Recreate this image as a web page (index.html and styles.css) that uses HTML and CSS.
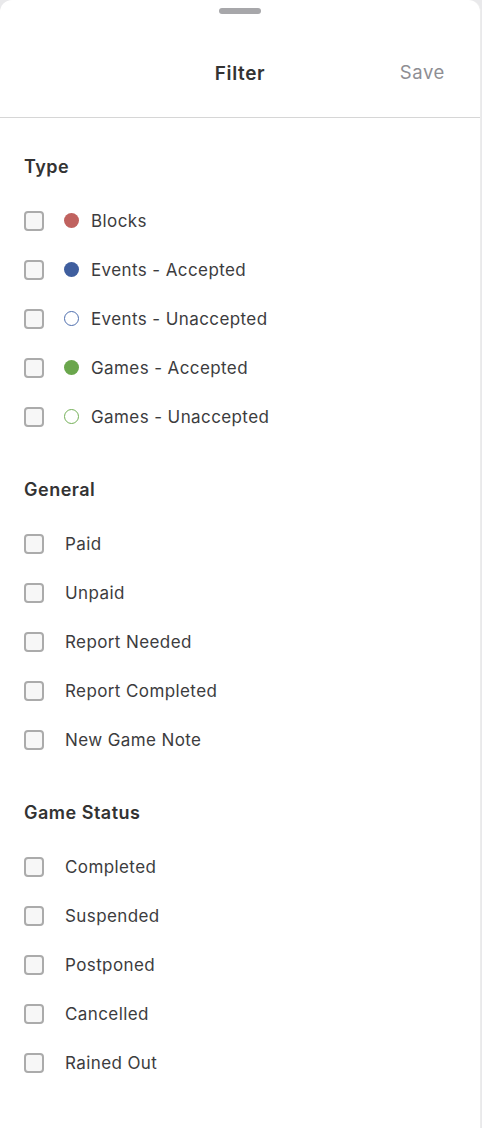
FILE: index.html
```html
<!DOCTYPE html>
<html lang="en">
<head>
    <meta charset="UTF-8">
    <meta name="viewport" content="width=device-width, initial-scale=1.0">
    <title>Filter</title>
    <link rel="stylesheet" href="styles.css">
</head>
<body>

    <div class="sheet">

        <!-- Header -->
        <div class="sheet-header">
            <div class="handle"></div>
            <div class="title-bar">
                <span class="title">Filter</span>
                <button class="save-btn">Save</button>
            </div>
        </div>

        <!-- Type -->
        <div class="section">
            <h3 class="section-title">Type</h3>
            <label class="row"><input type="checkbox"><span class="dot red"></span><span class="label">Blocks</span></label>
            <label class="row"><input type="checkbox"><span class="dot blue"></span><span class="label">Events - Accepted</span></label>
            <label class="row"><input type="checkbox"><span class="dot blue-ring"></span><span class="label">Events - Unaccepted</span></label>
            <label class="row"><input type="checkbox"><span class="dot green"></span><span class="label">Games - Accepted</span></label>
            <label class="row"><input type="checkbox"><span class="dot green-ring"></span><span class="label">Games - Unaccepted</span></label>
        </div>

        <!-- General -->
        <div class="section">
            <h3 class="section-title">General</h3>
            <label class="row"><input type="checkbox"><span class="label plain">Paid</span></label>
            <label class="row"><input type="checkbox"><span class="label plain">Unpaid</span></label>
            <label class="row"><input type="checkbox"><span class="label plain">Report Needed</span></label>
            <label class="row"><input type="checkbox"><span class="label plain">Report Completed</span></label>
            <label class="row"><input type="checkbox"><span class="label plain">New Game Note</span></label>
        </div>

        <!-- Game Status -->
        <div class="section">
            <h3 class="section-title">Game Status</h3>
            <label class="row"><input type="checkbox"><span class="label plain">Completed</span></label>
            <label class="row"><input type="checkbox"><span class="label plain">Suspended</span></label>
            <label class="row"><input type="checkbox"><span class="label plain">Postponed</span></label>
            <label class="row"><input type="checkbox"><span class="label plain">Cancelled</span></label>
            <label class="row"><input type="checkbox"><span class="label plain">Rained Out</span></label>
        </div>

    </div>

</body>
</html>
```

FILE: styles.css
```css
body {
    margin: 0;
    background-color: #e9e9eb;
    font-family: Inter, "Noto Sans", sans-serif;
    color: #3c3c3e;
}
.sheet {
    width: 481px;
    height: 1128px;
    background-color: #fff;
    border-right: 1px solid #ececec;
    border-radius: 12px 12px 0 0;
    box-sizing: border-box;
}
.sheet-header {
    height: 117px;
    border-bottom: 1px solid #d6d6d6;
    display: flex;
    flex-direction: column;
    align-items: center;
}
.handle {
    width: 42px;
    height: 6px;
    margin-top: 8px;
    border-radius: 3px;
    background-color: #a7a7aa;
}
.title-bar {
    position: relative;
    width: 100%;
    height: 44px;
    margin-top: 37px;
    display: flex;
    align-items: center;
    justify-content: center;
}
.title {
    font-size: 19px;
    font-weight: 600;
    letter-spacing: 0.6px;
    color: #333;
}
.save-btn {
    position: absolute;
    right: 35px;
    top: 10px;
    border: none;
    background: none;
    padding: 0;
    font-family: inherit;
    font-size: 18.5px;
    letter-spacing: 0.6px;
    color: #8e8e93;
    cursor: pointer;
}
.section {
    padding: 37px 0 0 24px;
}
.section-title {
    margin: 0 0 17px 0;
    font-size: 18px;
    line-height: 24px;
    font-weight: 600;
    letter-spacing: 0.5px;
    color: #333;
}
.row {
    display: flex;
    align-items: center;
    height: 49px;
    font-size: 17px;
    letter-spacing: 0.4px;
}
.row input {
    appearance: none;
    -webkit-appearance: none;
    width: 20px;
    height: 20px;
    margin: 0;
    border: 2px solid #ababab;
    border-radius: 4px;
    background-color: #f7f7f7;
    box-sizing: border-box;
}
.dot {
    width: 15px;
    height: 15px;
    margin-left: 20px;
    margin-right: 12px;
    border-radius: 50%;
    box-sizing: border-box;
}
.red { background-color: #c0625f; }
.blue { background-color: #3f5e9e; }
.green { background-color: #6aa64c; }
.blue-ring { border: 1.5px solid #4f6fae; }
.green-ring { border: 1.5px solid #74b058; }
.label.plain {
    margin-left: 21px;
}
```
